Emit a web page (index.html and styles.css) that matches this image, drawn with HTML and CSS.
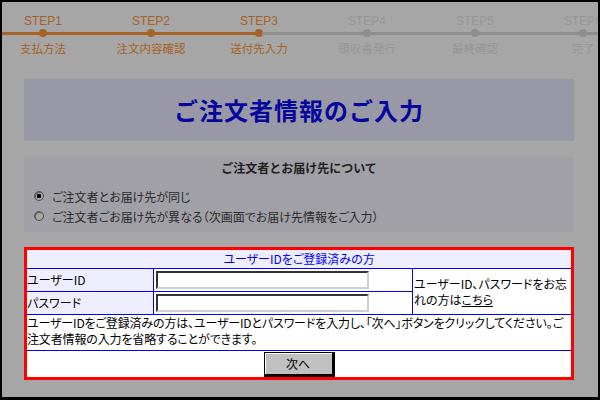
FILE: index.html
```html
<!DOCTYPE html>
<html lang="ja">
<head>
<meta charset="utf-8">
<title>ご注文者情報のご入力</title>
<link rel="stylesheet" href="styles.css">
</head>
<body>
<div class="frame">
  <ol class="steps">
    <li class="step done"><span class="step-num">STEP1</span><span class="track"><i class="seg"></i><i class="dot"></i><i class="seg"></i></span><span class="step-name">支払方法</span></li>
    <li class="step done"><span class="step-num">STEP2</span><span class="track"><i class="seg"></i><i class="dot"></i><i class="seg"></i></span><span class="step-name">注文内容確認</span></li>
    <li class="step current"><span class="step-num">STEP3</span><span class="track"><i class="seg"></i><i class="dot"></i><i class="seg"></i></span><span class="step-name">送付先入力</span></li>
    <li class="step"><span class="step-num">STEP4</span><span class="track"><i class="seg"></i><i class="dot"></i><i class="seg"></i></span><span class="step-name">領収書発行</span></li>
    <li class="step"><span class="step-num">STEP5</span><span class="track"><i class="seg"></i><i class="dot"></i><i class="seg"></i></span><span class="step-name">最終確認</span></li>
    <li class="step"><span class="step-num">STEP6</span><span class="track"><i class="seg"></i><i class="dot"></i><i class="seg"></i></span><span class="step-name">完了</span></li>
  </ol>
  <main class="content">
    <h1 class="title">ご注文者情報のご入力</h1>
    <section class="delivery">
      <h2 class="delivery-head">ご注文者とお届け先について</h2>
      <label class="opt"><input type="radio" name="dest" checked><span>ご注文者とお届け先が同じ</span></label>
      <label class="opt"><input type="radio" name="dest"><span>ご注文者ごお届け先が異なる（次画面でお届け先情報をご入力）</span></label>
    </section>
    <div class="login">
      <table class="login-table">
        <colgroup><col class="c1"><col class="c2"><col class="c3"></colgroup>
        <tr><th class="login-head" colspan="3">ユーザーIDをご登録済みの方</th></tr>
        <tr>
          <td class="lbl">ユーザーID</td>
          <td class="fld"><input type="text" class="inp"></td>
          <td class="note" rowspan="2">ユーザーID、パスワードをお忘れの方は<a href="#" class="link">こちら</a></td>
        </tr>
        <tr>
          <td class="lbl">パスワード</td>
          <td class="fld"><input type="password" class="inp"></td>
        </tr>
        <tr><td class="desc" colspan="3">ユーザーIDをご登録済みの方は、ユーザーIDとパスワードを入力し、「次へ」ボタンをクリックしてください。ご<br>注文者情報の入力を省略することができます。</td></tr>
        <tr><td class="act" colspan="3"><button type="button" class="btn">次へ</button></td></tr>
      </table>
    </div>
  </main>
  <div class="overlay"></div>
</div>
</body>
</html>
```

FILE: styles.css
```css
* { box-sizing: border-box; }
html, body { margin: 0; padding: 0; background: #000; }
body { font-family: "Noto Sans CJK JP", "Noto Sans", sans-serif; font-size: 12px; color: #000; }

.frame {
  width: 600px;
  height: 400px;
  overflow: hidden;
  background: #fff;
  border-style: solid;
  border-color: #000;
  border-width: 2px 2px 3px 2px;
}

/* steps */
.steps {
  list-style: none;
  margin: 0 0 0 -13px;
  padding: 12px 0 5px;
  display: flex;
  width: 648px;
}
.step {
  width: 108px;
  flex: none;
  display: flex;
  flex-direction: column;
  align-items: stretch;
  text-align: center;
  color: #e8e8e8;
}
.step-num { font-family: "Liberation Sans", Arial, sans-serif; font-size: 12px; line-height: 14px; }
.step-name { font-size: 11.5px; line-height: 14px; margin-top: 3px; }
.track { display: flex; align-items: center; height: 10px; }
.seg { flex: 1; height: 3px; background: #dadada; }
.dot { width: 8px; height: 8px; border-radius: 50%; background: #dadada; flex: none; margin: 0 -1px; }
.step.done, .step.current { color: #ff9838; }
.step.done .seg, .step.done .dot,
.step.current .seg:first-child, .step.current .dot { background: #ff9838; }

/* content */
.content { padding: 0 24px 0 22px; }
.title {
  margin: 19px 0 0;
  height: 62px;
  line-height: 62px;
  background: #eaeaff;
  color: #0a0af0;
  font-size: 24px;
  font-weight: 700;
  letter-spacing: 1px;
  text-align: center;
}
.delivery {
  margin-top: 16px;
  height: 75px;
  background: #f6f6ff;
  padding: 4px 0 0 10px;
  color: #444;
}
.delivery-head {
  margin: 0 0 11px;
  font-size: 12px;
  line-height: 14px;
  font-weight: 700;
  color: #333;
  text-align: center;
  padding-right: 10px;
}
.opt { display: flex; align-items: center; height: 20px; font-feature-settings: "palt"; }
.opt input {
  appearance: none;
  -webkit-appearance: none;
  width: 10px; height: 10px;
  margin: 0 8px 0 0;
  border-radius: 50%;
  border: 1px solid #777;
  background: #fff;
  box-shadow: inset 1px 1px 0 #999;
  flex: none;
}
.opt input:checked { background: radial-gradient(circle, #000 0 2px, #fff 2.5px); }

/* login */
.login {
  position: relative;
  z-index: 2;
  margin-top: 15px;
  border: 3px solid #ff0000;
  background: #fff;
}
.login-table {
  width: 100%;
  table-layout: fixed;
  border-collapse: separate;
  border-spacing: 0;
  font-size: 12px;
  font-feature-settings: "palt";
}
.c1 { width: 127px; }
.c2 { width: 259px; }
.c3 { width: 158px; }
.login-table th, .login-table td { padding: 0; }
.login-head {
  height: 19px;
  background: #eeeeff;
  color: #0000ff;
  font-weight: 400;
  border-bottom: 1px solid #0000ff;
  text-align: center;
  line-height: 16px;
}
.lbl {
  height: 23px;
  background: #eeeeff;
  border-right: 1px solid #0000ff;
  border-bottom: 1px solid #0000ff;
  vertical-align: middle;
  line-height: 16px;
}
.fld {
  height: 23px;
  border-right: 1px solid #0000ff;
  border-bottom: 1px solid #0000ff;
  padding-left: 2px !important;
  vertical-align: middle;
}
.inp {
  display: block;
  width: 213px;
  height: 18px;
  margin: 0;
  padding: 0 2px;
  background: #fff;
  border-style: solid;
  border-width: 2px;
  border-color: #333 #cfcfcf #cfcfcf #333;
  font-size: 12px;
}
.note {
  border-bottom: 1px solid #0000ff;
  vertical-align: middle;
  line-height: 16px;
  padding-left: 1px !important;
}
.link { color: #000; text-decoration: underline; }
.desc {
  height: 36px;
  border-bottom: 1px solid #0000ff;
  vertical-align: top;
  line-height: 16px;
  letter-spacing: -0.15px;
}
.act { height: 25px; text-align: center; vertical-align: top; }
.btn {
  display: inline-block;
  width: 71px;
  height: 25px;
  margin: 1px 0 0;
  padding: 0;
  background: #c0c0c0;
  border-style: solid;
  border-color: #000;
  border-width: 1px 3px 3px 1px;
  box-shadow: inset 1px 1px 0 #fff;
  font-family: "Noto Sans CJK JP", sans-serif;
  font-size: 12px;
  color: #000;
  line-height: 18px;
}

.overlay {
  position: fixed;
  inset: 0;
  background: rgba(0, 0, 0, 0.35);
  z-index: 1;
}
```
